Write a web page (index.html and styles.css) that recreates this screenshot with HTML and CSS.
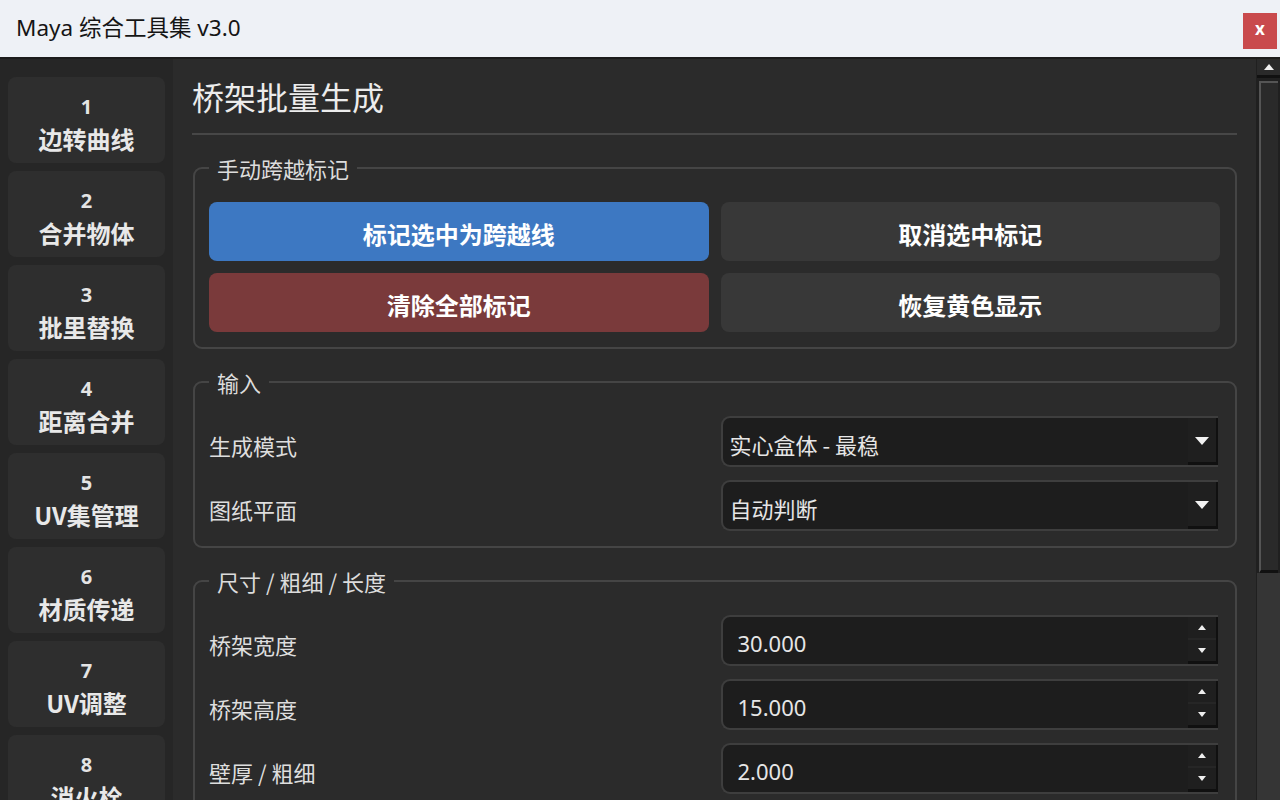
FILE: index.html
```html
<!DOCTYPE html>
<html lang="zh-CN">
<head>
<meta charset="utf-8">
<title>Maya 综合工具集 v3.0</title>
<link rel="stylesheet" href="styles.css">
</head>
<body>
<div class="window">
  <header class="titlebar">
    <span class="win-title">Maya 综合工具集 v3.0</span>
    <button class="close">x</button>
  </header>
  <div class="body">
    <nav class="sidebar">
      <div class="nav-item"><span class="num">1</span><span class="label">边转曲线</span></div>
      <div class="nav-item"><span class="num">2</span><span class="label">合并物体</span></div>
      <div class="nav-item"><span class="num">3</span><span class="label">批里替换</span></div>
      <div class="nav-item"><span class="num">4</span><span class="label">距离合并</span></div>
      <div class="nav-item"><span class="num">5</span><span class="label">UV集管理</span></div>
      <div class="nav-item"><span class="num">6</span><span class="label">材质传递</span></div>
      <div class="nav-item"><span class="num">7</span><span class="label">UV调整</span></div>
      <div class="nav-item"><span class="num">8</span><span class="label">消火栓</span></div>
    </nav>
    <main class="content">
      <h1 class="page-title">桥架批量生成</h1>
      <div class="rule"></div>

      <section class="group">
        <div class="group-title">手动跨越标记</div>
        <div class="btn-grid">
          <button class="btn btn-blue">标记选中为跨越线</button>
          <button class="btn btn-gray">取消选中标记</button>
          <button class="btn btn-red">清除全部标记</button>
          <button class="btn btn-gray">恢复黄色显示</button>
        </div>
      </section>

      <section class="group">
        <div class="group-title">输入</div>
        <div class="form">
          <div class="form-row">
            <span class="form-label">生成模式</span>
            <div class="field">
              <span class="combo-text">实心盒体 - 最稳</span>
              <span class="drop"><svg width="14" height="8" viewBox="0 0 14 8"><path d="M0 0H14L7 8Z" fill="#f2f2f2"/></svg></span>
            </div>
          </div>
          <div class="form-row">
            <span class="form-label">图纸平面</span>
            <div class="field">
              <span class="combo-text">自动判断</span>
              <span class="drop"><svg width="14" height="8" viewBox="0 0 14 8"><path d="M0 0H14L7 8Z" fill="#f2f2f2"/></svg></span>
            </div>
          </div>
        </div>
      </section>

      <section class="group">
        <div class="group-title">尺寸 / 粗细 / 长度</div>
        <div class="form">
          <div class="form-row">
            <span class="form-label">桥架宽度</span>
            <div class="field">
              <span class="spin-text">30.000</span>
              <span class="spin-btns">
                <span class="spin-btn"><svg width="8" height="5" viewBox="0 0 8 5"><path d="M0 5H8L4 0Z" fill="#eee"/></svg></span>
                <span class="spin-btn"><svg width="8" height="5" viewBox="0 0 8 5"><path d="M0 0H8L4 5Z" fill="#eee"/></svg></span>
              </span>
            </div>
          </div>
          <div class="form-row">
            <span class="form-label">桥架高度</span>
            <div class="field">
              <span class="spin-text">15.000</span>
              <span class="spin-btns">
                <span class="spin-btn"><svg width="8" height="5" viewBox="0 0 8 5"><path d="M0 5H8L4 0Z" fill="#eee"/></svg></span>
                <span class="spin-btn"><svg width="8" height="5" viewBox="0 0 8 5"><path d="M0 0H8L4 5Z" fill="#eee"/></svg></span>
              </span>
            </div>
          </div>
          <div class="form-row">
            <span class="form-label">壁厚 / 粗细</span>
            <div class="field">
              <span class="spin-text">2.000</span>
              <span class="spin-btns">
                <span class="spin-btn"><svg width="8" height="5" viewBox="0 0 8 5"><path d="M0 5H8L4 0Z" fill="#eee"/></svg></span>
                <span class="spin-btn"><svg width="8" height="5" viewBox="0 0 8 5"><path d="M0 0H8L4 5Z" fill="#eee"/></svg></span>
              </span>
            </div>
          </div>
        </div>
      </section>
    </main>
    <div class="scrollbar">
      <div class="sb-up"><svg width="10" height="6" viewBox="0 0 10 6"><path d="M0 6H10L5 0Z" fill="#f0f0f0"/></svg></div>
      <div class="sb-handle"></div>
      <div class="sb-track"></div>
    </div>
  </div>
</div>
</body>
</html>
```

FILE: styles.css
```css
* { box-sizing: border-box; }

html, body {
  margin: 0;
  padding: 0;
  width: 1280px;
  height: 800px;
  overflow: hidden;
  background: #1b1b1b;
}

body {
  font-family: "Noto Sans", "Noto Sans CJK SC", sans-serif;
  color: #e2e2e2;
}

.window {
  display: flex;
  flex-direction: column;
  width: 1280px;
  height: 800px;
}

/* ---------- title bar ---------- */
.titlebar {
  flex: none;
  height: 59px;
  background: #eef1f6;
  border-bottom: 2px solid #1c1c1c;
  display: flex;
  align-items: center;
  justify-content: space-between;
  padding: 0 3px 0 16px;
}

.win-title {
  font-size: 22.5px;
  line-height: 28px;
  margin-bottom: 2px;
  color: #151515;
  font-family: "Noto Sans", "Noto Sans CJK SC", sans-serif;
}

.close {
  width: 34px;
  height: 36px;
  margin-top: 4px;
  border: none;
  background: #c94a4d;
  color: #ffffff;
  font-family: "Noto Sans", sans-serif;
  font-weight: bold;
  font-size: 17px;
  line-height: 20px;
  padding: 0 0 3px;
}

/* ---------- body ---------- */
.body {
  flex: 1;
  display: flex;
  min-height: 0;
}

.sidebar {
  flex: none;
  width: 173px;
  background: #262626;
  padding: 18px 8px 0 8px;
  display: flex;
  flex-direction: column;
  gap: 8px;
  overflow: hidden;
}

.nav-item {
  flex: none;
  height: 86px;
  background: #2e2e2e;
  border-radius: 8px;
  display: flex;
  flex-direction: column;
  align-items: center;
  padding-top: 15px;
  font-weight: bold;
  color: #e8e8e8;
}

.nav-item .num {
  font-size: 20px;
  line-height: 30px;
  color: #e4e4e4;
}

.nav-item .label {
  font-size: 24px;
  line-height: 33px;
  font-family: "Noto Sans CJK SC", sans-serif;
}

/* ---------- content ---------- */
.content {
  flex: 1;
  min-width: 0;
  background: #2b2b2b;
  padding: 17px 19px 0 19px;
  overflow: hidden;
}

.page-title {
  margin: 0;
  font-size: 32px;
  line-height: 40px;
  font-weight: normal;
  color: #ececec;
  font-family: "Noto Sans CJK SC", sans-serif;
}

.rule {
  height: 2px;
  background: #474747;
  margin-top: 17px;
  margin-bottom: 32px;
}

.group {
  border: 2px solid #454545;
  border-radius: 9px;
  padding: 0 15px 15px 14px;
  margin: 0 0 32px 1px;
}

.group-title {
  width: fit-content;
  margin-top: -16px;
  padding: 0 8px;
  background: #2b2b2b;
  font-size: 22px;
  line-height: 30px;
  color: #dcdcdc;
  font-family: "Noto Sans CJK SC", sans-serif;
}

.btn-grid {
  margin-top: 19px;
  display: grid;
  grid-template-columns: 1fr 1fr;
  gap: 12px;
}

.btn {
  height: 59px;
  border: none;
  border-radius: 8px;
  font-family: "Noto Sans CJK SC", sans-serif;
  font-weight: bold;
  font-size: 24px;
  color: #ffffff;
  padding: 4px 0 0;
}

.btn-blue { background: #3d78c2; }
.btn-red { background: #7a3a3b; }
.btn-gray { background: #383838; }

.form {
  margin-top: 19px;
  display: flex;
  flex-direction: column;
  gap: 13px;
}

.form-row {
  display: grid;
  grid-template-columns: 1fr 1fr;
  column-gap: 12px;
  align-items: center;
  height: 51px;
}

.form-label {
  font-size: 22px;
  line-height: 30px;
  padding-top: 6px;
  color: #dedede;
  font-family: "Noto Sans CJK SC", sans-serif;
}

.field {
  height: 51px;
  margin-right: 2px;
  display: flex;
  align-items: stretch;
  background: #1d1d1d;
  border: 2px solid #3e3e3e;
  border-right: none;
  border-radius: 9px 0 0 9px;
  overflow: hidden;
}

.combo-text {
  flex: 1;
  display: flex;
  align-items: center;
  padding: 5px 0 0 7px;
  font-size: 22px;
  color: #e6e6e6;
  font-family: "Noto Sans CJK SC", sans-serif;
}

.spin-text {
  flex: 1;
  display: flex;
  align-items: center;
  padding: 5px 0 0 15px;
  font-size: 22px;
  color: #e6e6e6;
  font-family: "Noto Sans", sans-serif;
}

.drop {
  flex: none;
  width: 30px;
  display: flex;
  align-items: center;
  justify-content: center;
  background: #1f1f1f;
  border-right: 2px solid #101010;
  border-bottom: 3px solid #101010;
  padding-top: 2px;
}

.spin-btns {
  flex: none;
  width: 30px;
  display: flex;
  flex-direction: column;
  border-right: 2px solid #101010;
  border-bottom: 3px solid #101010;
}

.spin-btn {
  flex: 1;
  display: flex;
  align-items: center;
  justify-content: center;
  background: #1f1f1f;
}

.spin-btn + .spin-btn {
  border-top: 2px solid #262626;
}

/* ---------- scrollbar ---------- */
.scrollbar {
  flex: none;
  width: 24px;
  background: #202020;
  display: flex;
  flex-direction: column;
  padding: 0 0 0 1px;
}

.sb-up {
  flex: none;
  height: 19px;
  display: flex;
  align-items: center;
  justify-content: center;
  background: #2a2a2a;
  border-bottom: 3px solid #111;
}

.sb-handle {
  flex: none;
  height: 492px;
  margin: 3px 2px 0 2px;
  background: #2a2a2a;
  border-left: 2px solid #555;
  border-top: 2px solid #555;
  border-bottom: 3px solid #111;
}

.sb-track {
  flex: 1;
  background: #353535;
}
```
